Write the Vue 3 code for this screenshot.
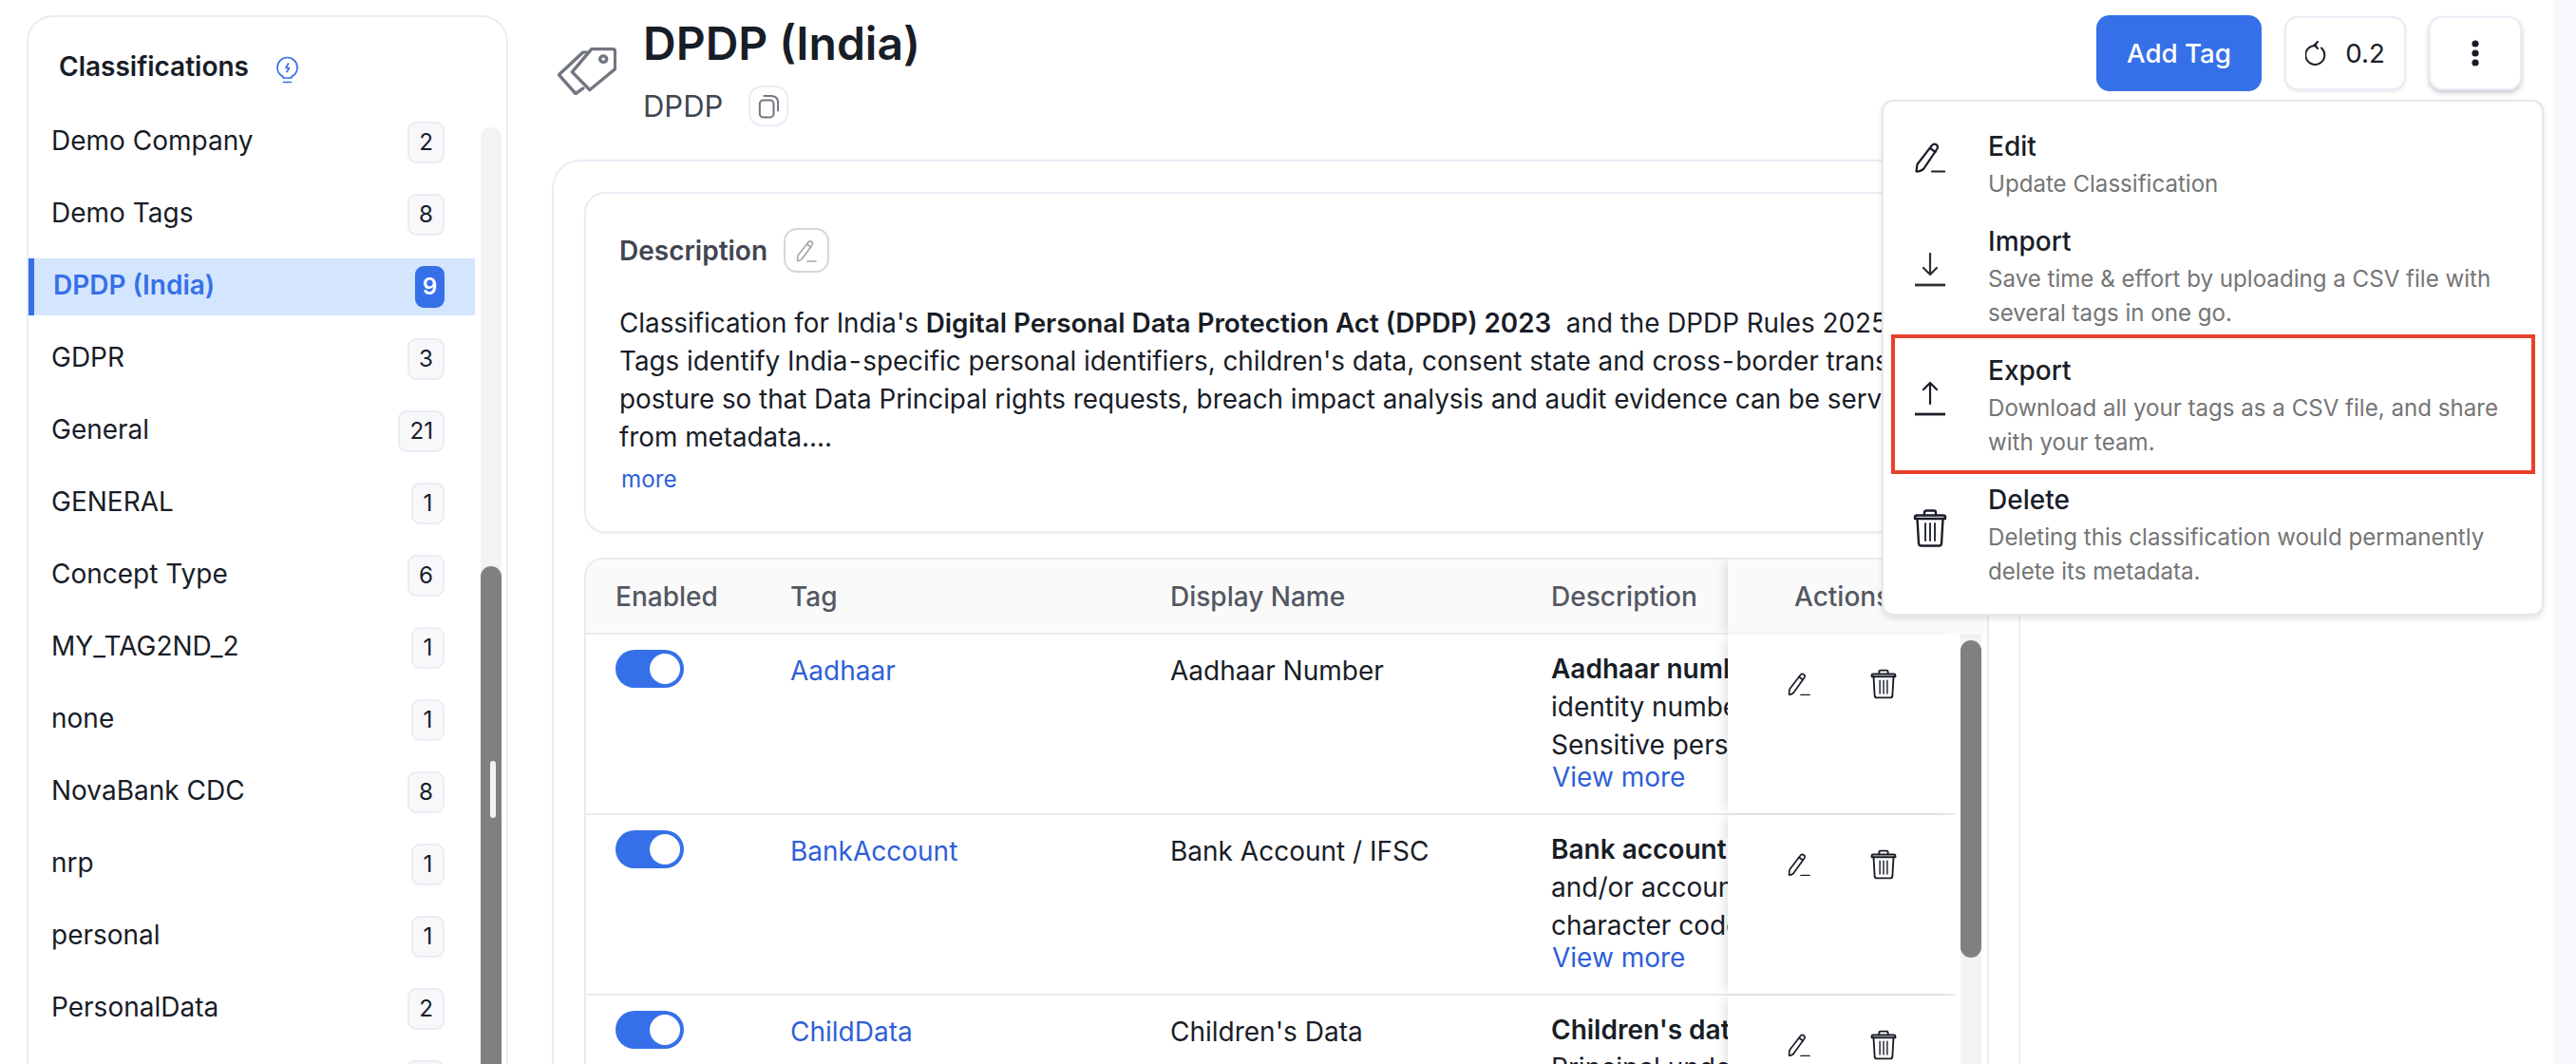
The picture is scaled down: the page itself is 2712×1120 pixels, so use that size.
<script setup>
const classifications = [
  { name: 'Demo Company', count: 2 },
  { name: 'Demo Tags', count: 8 },
  { name: 'DPDP (India)', count: 9, active: true },
  { name: 'GDPR', count: 3 },
  { name: 'General', count: 21 },
  { name: 'GENERAL', count: 1 },
  { name: 'Concept Type', count: 6 },
  { name: 'MY_TAG2ND_2', count: 1 },
  { name: 'none', count: 1 },
  { name: 'NovaBank CDC', count: 8 },
  { name: 'nrp', count: 1 },
  { name: 'personal', count: 1 },
  { name: 'PersonalData', count: 2 },
  { name: 'PII', count: 4 }
]

const tags = [
  {
    name: 'Aadhaar',
    display: 'Aadhaar Number',
    title: 'Aadhaar number',
    lines: ['identity number issued by UIDAI.', 'Sensitive personal identifier.']
  },
  {
    name: 'BankAccount',
    display: 'Bank Account / IFSC',
    title: 'Bank account',
    lines: ['and/or account details with', 'character codes for the branch.']
  },
  {
    name: 'ChildData',
    display: "Children's Data",
    title: "Children's data",
    lines: ['Principal under the age of 18.', 'Requires verifiable consent.']
  }
]

const menuItems = [
  { key: 'edit', title: 'Edit', text: 'Update Classification' },
  { key: 'import', title: 'Import', text: 'Save time & effort by uploading a CSV file with several tags in one go.' },
  { key: 'export', title: 'Export', text: 'Download all your tags as a CSV file, and share with your team.' },
  { key: 'delete', title: 'Delete', text: 'Deleting this classification would permanently delete its metadata.' }
]
</script>

<template>
  <div class="page">
    <!-- Left list -->
    <aside class="sidebar">
      <div class="sidebar-head">
        <span class="sidebar-title">Classifications</span>
        <svg class="bulb" viewBox="0 0 23 29" fill="none" stroke="#3670e8" stroke-width="1.700" stroke-linecap="round" stroke-linejoin="round">
          <path d="M7 21.500C3.500 20 1 16.200 1 12 1 6.200 5.700 1.500 11.500 1.500S22 6.200 22 12c0 4.200-2.500 8-6 9.500V23H7z" />
          <path d="M12.500 8 10 12.500h3.500L11 16.500" />
          <path d="M7.500 27.500h8" />
        </svg>
      </div>
      <div class="sidebar-body">
        <ul class="class-list">
          <li v-for="item in classifications" :key="item.name" class="class-item" :class="{ active: item.active }">
            <span class="class-name">{{ item.name }}</span>
            <span class="count">{{ item.count }}</span>
          </li>
        </ul>
        <div class="list-scroll"><div class="list-thumb"></div></div>
      </div>
    </aside>

    <main class="main">
      <header class="head">
        <svg class="tag-icon" viewBox="0 0 62 54" preserveAspectRatio="none" fill="none" stroke="#717680" stroke-width="3.500" stroke-linecap="round" stroke-linejoin="round">
          <path d="M58 1.800H35.700L15.400 27.900l18.500 20.300 26.800-23.900V4.500q0-2.700-2.700-2.700z" />
          <circle cx="48.200" cy="13.200" r="3.500" />
          <path d="M32 5.400h-5.200L1.500 31 19 52.500l7.800-6.100" />
        </svg>
        <div class="head-text">
          <h1 class="title">DPDP (India)</h1>
          <div class="sub-row">
            <span class="sub">DPDP</span>
            <button class="copy-btn">
              <svg viewBox="0 0 24 28" width="22" height="26" fill="none" stroke="#717680" stroke-width="2.200" stroke-linecap="round">
                <rect x="2" y="7" width="16" height="19.500" rx="4" />
                <path d="M7 2h8q8 0 8 8v9" />
              </svg>
            </button>
          </div>
        </div>
        <div class="head-actions">
          <button class="add-btn">Add Tag</button>
          <button class="ghost-btn version-btn">
            <svg viewBox="0 0 24 26" width="24" height="26" fill="none" stroke="#181d27" stroke-width="2" stroke-linecap="round" stroke-linejoin="round">
              <path d="M17 7.500A10 10 0 1 1 11.500 5" />
              <path d="M13 1 9.500 4.500 13 8" />
            </svg>
            <span>0.2</span>
          </button>
          <button class="ghost-btn more-btn">
            <svg viewBox="0 0 8 28" width="8" height="28" fill="#181d27">
              <circle cx="4" cy="4" r="3.600" />
              <circle cx="4" cy="14" r="3.600" />
              <circle cx="4" cy="24" r="3.600" />
            </svg>
          </button>
        </div>
      </header>

      <section class="card">
        <div class="desc-card">
          <div class="desc-head">
            <span class="desc-title">Description</span>
            <button class="edit-btn">
              <svg viewBox="0 0 24 24" width="24" height="24" fill="none" stroke="#a4a7ae" stroke-width="1.600" stroke-linecap="round" stroke-linejoin="round">
                <path d="M2.500 22.500 3 17 14 3q1.500-1.800 3.500-.5t.5 3.500L7 21q-2.500 2-4.500 1.500z" />
                <path d="M12.500 5l4 3" />
                <path d="M13 23h9" />
              </svg>
            </button>
          </div>
          <p class="desc-text">
            Classification for India's <b>Digital Personal Data Protection Act (DPDP) 2023</b>&nbsp; and the DPDP Rules 2025.<br />
            Tags identify India<span class="nb">‑</span>specific personal identifiers, children's data, consent state and cross<span class="nb">‑</span>border transfer<br />
            posture so that Data Principal rights requests, breach impact analysis and audit evidence can be served<br />
            from metadata....
          </p>
          <a class="more-link">more</a>
        </div>

        <div class="table">
          <div class="t-row t-header">
            <div class="t-cell">Enabled</div>
            <div class="t-cell">Tag</div>
            <div class="t-cell">Display Name</div>
            <div class="t-cell">Description</div>
            <div class="t-cell t-actions">Actions</div>
          </div>
          <div class="t-body">
            <div class="t-rows">
              <div v-for="tag in tags" :key="tag.name" class="t-row">
                <div class="t-cell"><span class="toggle"><span class="knob"></span></span></div>
                <div class="t-cell t-text"><a class="tag-link">{{ tag.name }}</a></div>
                <div class="t-cell t-text">{{ tag.display }}</div>
                <div class="t-cell t-desc">
                  <b>{{ tag.title }}</b>
                  <div v-for="line in tag.lines" :key="line">{{ line }}</div>
                  <a class="view-more">View more</a>
                </div>
                <div class="t-cell t-actions row-actions">
                  <div class="action-icons">
                    <svg viewBox="0 0 24 24" width="24" height="24" fill="none" stroke="#181d27" stroke-width="1.700" stroke-linecap="round" stroke-linejoin="round">
                      <path d="M1.500 23 2 17.500 13.500 2.500q1.500-1.800 3.500-.5t.5 3.500L6 21.500q-2.500 2-4.500 1.500z" />
                      <path d="M12 4.500l4 3" />
                      <path d="M14 23.500h9" />
                    </svg>
                    <svg viewBox="0 0 36 40" width="28" height="32" fill="none" stroke="#181d27" stroke-width="2.400" stroke-linecap="round" stroke-linejoin="round">
                      <path d="M2 8.500q0-2 2-2h28q2 0 2 2v1.500H2z" />
                      <path d="M12 6V3.500Q12 1.500 14 1.500h8q2 0 2 2V6" />
                      <path d="M4.500 10 6 36q.2 2.500 2.500 2.500h19q2.300 0 2.500-2.500l1.500-26" />
                      <path d="M13 15v18M18 15v18M23 15v18" stroke-width="1.800" />
                    </svg>
                  </div>
                </div>
              </div>
            </div>
            <div class="t-scroll"><div class="t-thumb"></div></div>
          </div>
        </div>
      </section>
    </main>

    <aside class="gutter"></aside>

    <!-- Dropdown of the three dots button -->
    <div class="menu">
      <div v-for="item in menuItems" :key="item.key" class="menu-item">
        <span class="menu-icon">
          <svg v-if="item.key === 'edit'" viewBox="0 0 32 32" width="32" height="32" fill="none" stroke="#181d27" stroke-width="2.200" stroke-linecap="round" stroke-linejoin="round">
            <path d="M1.500 30.500 2.500 23 18 3q2-2.300 4.500-.7t.7 4.700L9 28q-4 3-7.500 2.500z" />
            <path d="M16 6l5.500 4" />
            <path d="M18 30.500h13" />
          </svg>
          <svg v-else-if="item.key === 'import'" viewBox="0 0 36 36" width="36" height="36" fill="none" stroke="#2f2f2a" stroke-width="2.200" stroke-linecap="round" stroke-linejoin="round">
            <path d="M18 1v22M11 16l7 7 7-7" />
            <path d="M2 34h32" stroke-width="2.800" stroke-linecap="butt" />
          </svg>
          <svg v-else-if="item.key === 'export'" viewBox="0 0 36 36" width="36" height="36" fill="none" stroke="#181d27" stroke-width="2.200" stroke-linecap="round" stroke-linejoin="round">
            <path d="M18 23V1M11 8l7-7 7 7" />
            <path d="M2 34h32" stroke-width="2.800" stroke-linecap="butt" />
          </svg>
          <svg v-else viewBox="0 0 36 40" width="36" height="40" fill="none" stroke="#181d27" stroke-width="2.400" stroke-linecap="round" stroke-linejoin="round">
            <path d="M2 8.500q0-2 2-2h28q2 0 2 2v1.500H2z" />
            <path d="M12 6V3.500Q12 1.500 14 1.500h8q2 0 2 2V6" />
            <path d="M4.500 10 6 36q.2 2.500 2.500 2.500h19q2.300 0 2.500-2.500l1.500-26" />
            <path d="M13 15v18M18 15v18M23 15v18" stroke-width="1.800" />
          </svg>
        </span>
        <div class="menu-text">
          <div class="menu-title">{{ item.title }}</div>
          <div class="menu-sub">{{ item.text }}</div>
        </div>
        <span v-if="item.key === 'export'" class="menu-mark"></span>
      </div>
    </div>
  </div>
</template>

<style scoped>
.page {
  position: relative;
  display: flex;
  width: 2712px;
  height: 1120px;
  overflow: hidden;
  background: #fff;
  color: #181d27;
  font-family: Inter, "Liberation Sans", sans-serif;
  font-size: 28px;
}

button {
  font-family: inherit;
  cursor: pointer;
}

/* Sidebar */
.sidebar {
  flex: none;
  box-sizing: border-box;
  width: 507px;
  height: 1200px;
  margin: 16px 0 0 28px;
  border: 2px solid #eaecf5;
  border-radius: 28px;
}

.sidebar-head {
  display: flex;
  align-items: flex-start;
  gap: 29px;
  box-sizing: border-box;
  height: 94px;
  padding: 34px 0 0 32px;
}

.sidebar-title {
  font-weight: 600;
  line-height: 36px;
}

.bulb {
  width: 23px;
  height: 29px;
  margin-top: 7px;
}

.sidebar-body {
  display: flex;
}

.class-list {
  flex: none;
  display: flex;
  flex-direction: column;
  gap: 16px;
  width: 470px;
  margin: 0;
  padding: 8px 0 0;
  list-style: none;
}

.class-item {
  display: flex;
  align-items: center;
  justify-content: space-between;
  box-sizing: border-box;
  height: 60px;
  padding: 0 32px 0 24px;
}

.class-name {
  padding-bottom: 4px;
}

.count {
  box-sizing: border-box;
  min-width: 35px;
  height: 44px;
  padding: 0 10px;
  border: 2px solid #eaecf5;
  border-radius: 9px;
  background: #f7f8fa;
  font-size: 24.200px;
  line-height: 40px;
  text-align: center;
}

.class-item.active {
  padding-left: 20px;
  border-left: 6px solid #3670e8;
  background: #d4e6fd;
  color: #3670e8;
  font-weight: 600;
}

.active .count {
  min-width: 31px;
  padding: 0;
  border-color: #3670e8;
  background: #3670e8;
  color: #fff;
}

.list-scroll {
  flex: none;
  width: 22px;
  height: 1000px;
  margin: 22px 0 0 6px;
  border-radius: 11px 11px 0 0;
  background: #f3f3f3;
}

.list-thumb {
  position: relative;
  height: 600px;
  margin-top: 462px;
  border-radius: 11px 11px 0 0;
  background: #808080;
}

.list-thumb::after {
  content: '';
  position: absolute;
  top: 205px;
  left: 10px;
  width: 6px;
  height: 60px;
  border-radius: 3px;
  background: #f3f3f3;
}

/* Main */
.main {
  flex: 1;
  min-width: 0;
  margin-left: 46px;
}

.head {
  display: flex;
  align-items: flex-start;
  box-sizing: border-box;
  height: 168px;
  padding: 16px 33px 0 6px;
}

.tag-icon {
  flex: none;
  width: 62px;
  height: 50px;
  margin-top: 34px;
}

.head-text {
  margin-left: 28px;
  padding-top: 2px;
}

.title {
  margin: 0;
  font-size: 48px;
  font-weight: 600;
  line-height: 56px;
}

.sub-row {
  display: flex;
  align-items: center;
  gap: 27px;
  margin-top: 16px;
}

.sub {
  color: #414651;
  font-size: 31px;
  line-height: 43px;
}

.copy-btn {
  display: flex;
  align-items: center;
  justify-content: center;
  box-sizing: border-box;
  width: 42px;
  height: 43px;
  padding: 0;
  border: 2px solid #eaecf5;
  border-radius: 14px;
  background: #fff;
}

.head-actions {
  display: flex;
  align-items: center;
  gap: 24px;
  height: 80px;
  margin-left: auto;
}

.add-btn {
  width: 174px;
  height: 80px;
  border: 0;
  border-radius: 14px;
  background: #3670e8;
  color: #fff;
  font-size: 27.7px;
  font-weight: 500;
}

.ghost-btn {
  display: flex;
  align-items: center;
  justify-content: center;
  box-sizing: border-box;
  height: 78px;
  padding: 0;
  border: 2px solid #eaecf5;
  border-radius: 14px;
  background: #fff;
  color: #181d27;
  font-size: 27.7px;
  box-shadow: 0 2px 3px rgba(16, 24, 40, 0.08);
}

.version-btn {
  width: 128px;
  gap: 18px;
}

.more-btn {
  width: 98px;
  box-shadow: 0 3px 5px rgba(16, 24, 40, 0.22);
}

.card {
  box-sizing: border-box;
  width: 1546px;
  height: 1000px;
  padding: 32px 31px 0 32px;
  border: 2px solid #eaecf5;
  border-radius: 30px;
}

.desc-card {
  box-sizing: border-box;
  height: 359px;
  padding: 36px 35px 0;
  border: 2px solid #eaecf5;
  border-radius: 22px;
  box-shadow: 0 1px 2px rgba(16, 24, 40, 0.06);
  overflow: hidden;
}

.desc-head {
  display: flex;
  align-items: center;
  gap: 17px;
}

.desc-title {
  color: #414651;
  font-weight: 600;
}

.edit-btn {
  display: flex;
  align-items: center;
  justify-content: center;
  box-sizing: border-box;
  width: 48px;
  height: 47px;
  padding: 0;
  border: 2px solid #d5d7da;
  border-radius: 14px;
  background: #fff;
}

.desc-text {
  margin: 33px 0 0;
  font-size: 27.800px;
  line-height: 40px;
  white-space: nowrap;
}

.desc-text b {
  font-weight: 600;
}

.nb {
  margin: 0 3px;
}

.more-link {
  display: block;
  margin: 7px 0 0 2px;
  color: #2f5fd8;
  font-size: 24.200px;
  line-height: 36px;
}

/* Table */
.table {
  height: 540px;
  margin-top: 26px;
  border: 2px solid #ebebeb;
  border-radius: 20px 20px 0 0;
  overflow: hidden;
}

.t-row {
  display: grid;
  grid-template-columns: 184px 400px 401px 217px 1fr;
  box-sizing: border-box;
  height: 190px;
  border-bottom: 2px solid #ebebeb;
}

.t-header {
  height: 79px;
  background: #fafafa;
  color: #535862;
  font-weight: 500;
  line-height: 79px;
}

.t-cell {
  padding-left: 31px;
  white-space: nowrap;
  overflow: hidden;
}

.t-actions {
  position: relative;
  padding-left: 70px;
  background: inherit;
  box-shadow: -7px 0 9px -3px rgba(0, 0, 0, 0.1);
  overflow: visible;
}

.t-rows > .t-row {
  background: #fff;
}

.t-rows > .t-row > .t-cell:first-child {
  padding-top: 16px;
}

.t-body {
  display: flex;
}

.t-rows {
  flex: none;
  width: 1442px;
}

.toggle {
  display: flex;
  align-items: center;
  justify-content: flex-end;
  box-sizing: border-box;
  width: 72px;
  height: 40px;
  padding-right: 4px;
  border-radius: 20px;
  background: #3670e8;
}

.knob {
  width: 32px;
  height: 32px;
  border-radius: 50%;
  background: #fff;
}

.t-text {
  padding-top: 18px;
  line-height: 40px;
}

.tag-link,
.view-more {
  color: #2f5fd8;
}

.t-desc {
  padding-top: 16px;
  line-height: 40px;
}

.t-desc b {
  font-weight: 600;
}

.view-more {
  display: block;
  margin: -3px 0 0 1px;
  line-height: 34px;
}

.row-actions {
  padding: 36px 0 0 63px;
}

.action-icons {
  display: flex;
  align-items: center;
  gap: 63px;
  height: 32px;
}

.t-scroll {
  flex: none;
  width: 22px;
  height: 500px;
  margin-left: 5px;
  background: #f3f3f3;
}

.t-thumb {
  height: 334px;
  margin-top: 6px;
  border-radius: 11px;
  background: #808080;
}

.gutter {
  flex: none;
  width: 24px;
  background: #f8f9fc;
}

/* Menu */
.menu {
  position: absolute;
  top: 105px;
  left: 1981px;
  box-sizing: border-box;
  width: 697px;
  height: 543px;
  padding-top: 15px;
  border: 2px solid #e4e7ec;
  border-radius: 12px;
  background: #fff;
  box-shadow: 0 3px 6px rgba(16, 24, 40, 0.12);
}

.menu-item {
  position: relative;
  display: flex;
  align-items: center;
  box-sizing: border-box;
  height: 136px;
  padding: 0 20px 0 31px;
}

.menu-item:first-child {
  height: 101px;
}

.menu-icon {
  flex: none;
  display: flex;
  justify-content: center;
  width: 36px;
  margin-top: -14px;
  margin-right: 43px;
}

.menu-title {
  margin: 0 0 2px;
  font-weight: 500;
  line-height: 40px;
}

.menu-sub {
  color: #757575;
  font-size: 24.100px;
  line-height: 36px;
}

.menu-mark {
  position: absolute;
  top: -7px;
  right: 7px;
  bottom: -4px;
  left: 8px;
  border: 4px solid #e8412b;
  pointer-events: none;
}
</style>

<style>
html,
body {
  margin: 0;
  background: #fff;
}
</style>
